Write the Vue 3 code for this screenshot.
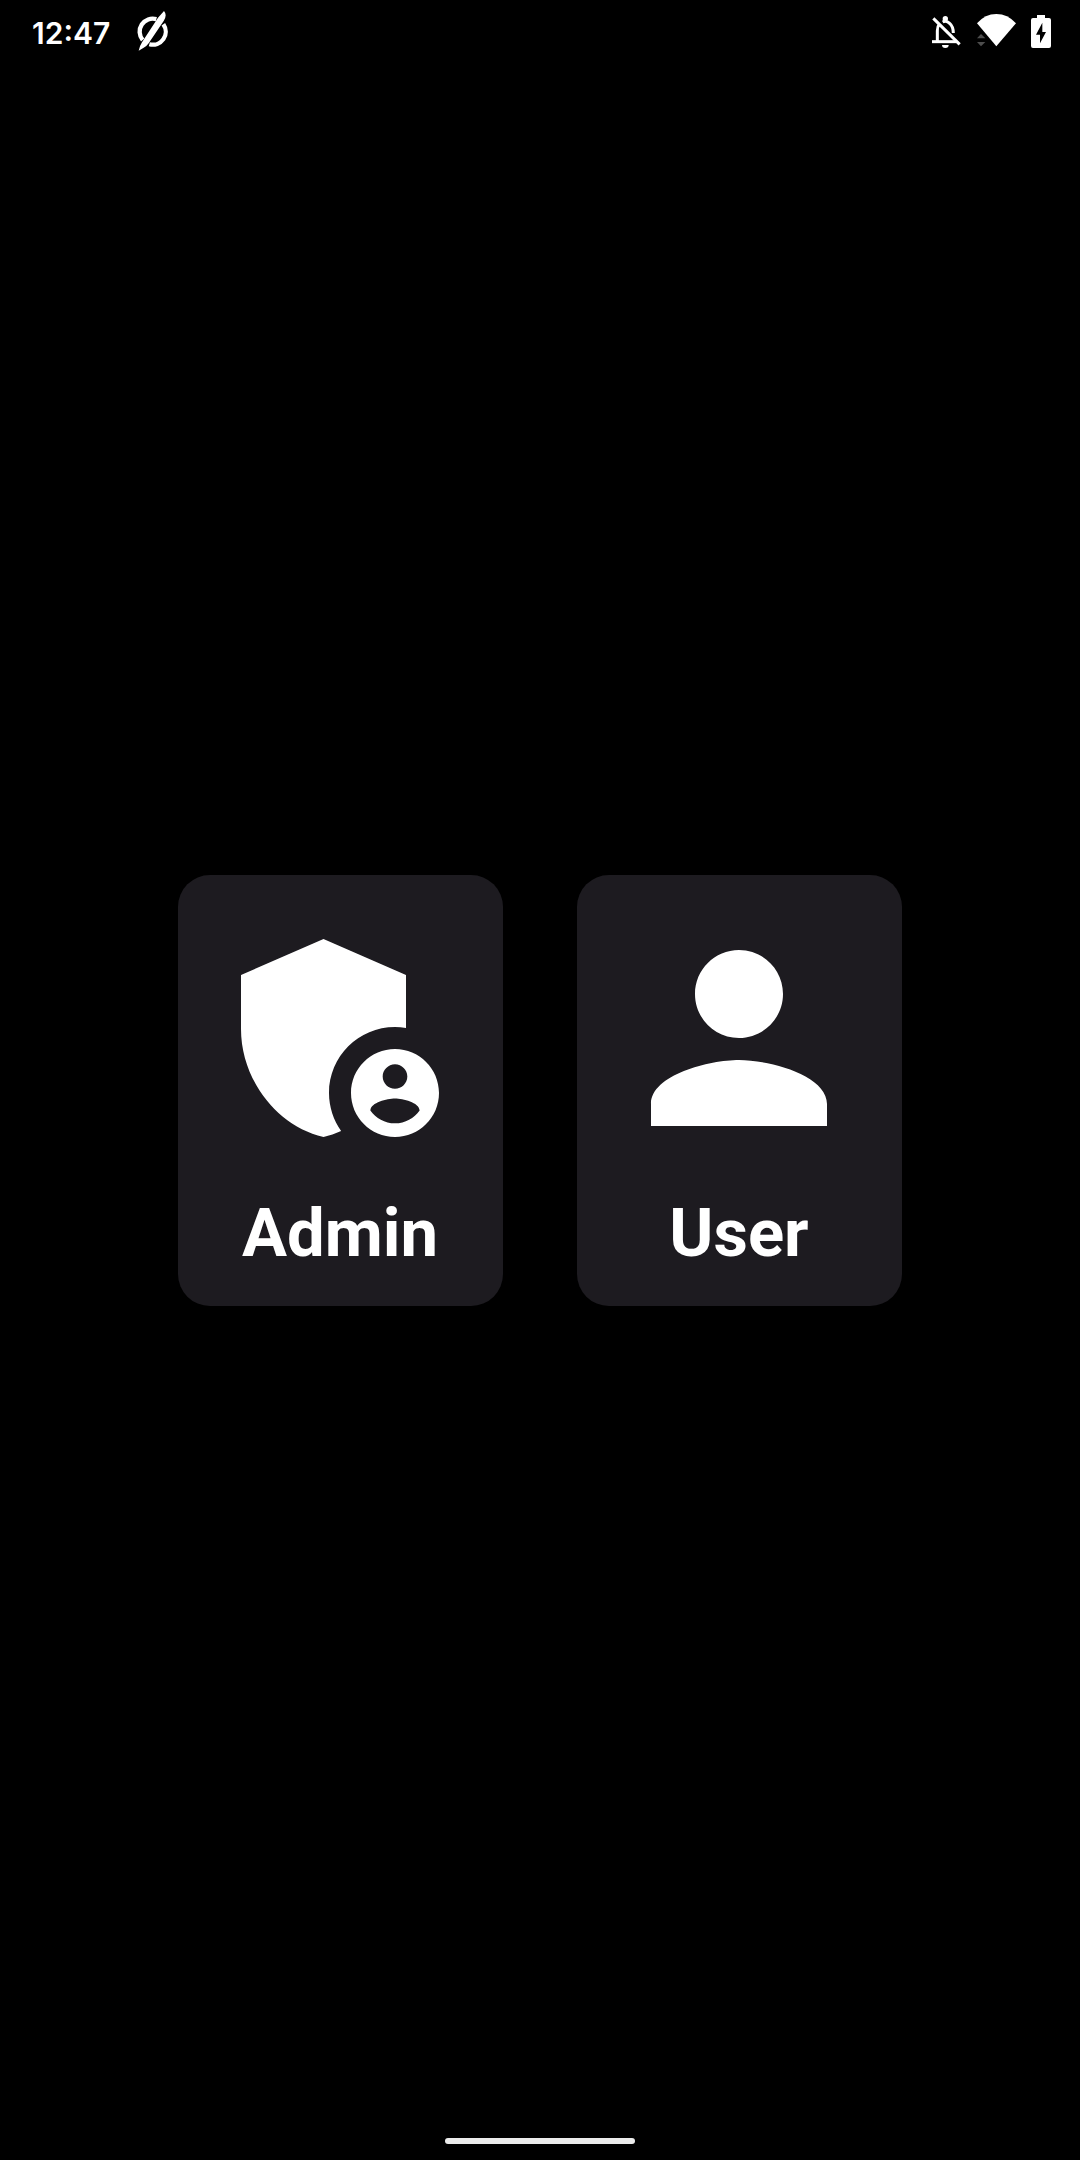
<script setup>
const roles = [
  { id: 'admin', label: 'Admin' },
  { id: 'user', label: 'User' },
]
</script>

<template>
  <div class="screen">
    <header class="status-bar">
      <div class="status-group left">
        <time class="clock">12:47</time>
        <svg class="app-icon" viewBox="0 0 120 144" aria-hidden="true">
          <path d="M73 33.600 A39 39 0 0 0 32 96" class="ring" />
          <path d="M94 48.500 A39 39 0 0 1 52 108.700" class="ring" />
          <path d="M96 9 Q101 14 101 22 Q101 30 95 39 L50 106 Q44 115 35 119 L20 128 Q23 114 30 103 L78 29 Z" fill="#fff" />
        </svg>
      </div>
      <div class="status-group right">
        <svg class="bell" viewBox="0 0 90 108" aria-hidden="true">
          <g fill="none" stroke="#fff" stroke-width="9">
            <path d="M3 83 H76" />
            <path d="M19 83 V50 Q19 38 25 31" />
            <path d="M35 24 Q46 18 56 28 Q67 38 67 57" />
            <path d="M7 13 L86 91" />
          </g>
          <circle cx="43" cy="14" r="8" fill="#fff" />
          <path d="M33 93 h20 a10 9 0 0 1 -20 0z" fill="#fff" />
        </svg>
        <svg class="wifi" viewBox="0 0 120 108" aria-hidden="true">
          <path d="M3 28 Q27 0 61 0 Q95 0 120 28 L61 97 Z" fill="#fff" />
          <path d="M3 73 L15 60 L28 73 Z M3 84 H28 L15 97 Z" fill="#4d4d4d" />
        </svg>
        <svg class="battery" viewBox="0 0 60 108" aria-hidden="true">
          <path fill-rule="evenodd" fill="#fff" d="M18 3 H42 V12 H54 Q60 12 60 18 V96 Q60 102 54 102 H6 Q0 102 0 96 V18 Q0 12 6 12 H18 Z M34 26 L15 62 H27 V88 L45 54 H34 Z" />
        </svg>
      </div>
    </header>

    <main class="roles">
      <button v-for="role in roles" :key="role.id" type="button" class="role-card">
        <svg class="role-icon" viewBox="0 0 24 24" fill="#fff" aria-hidden="true">
          <template v-if="role.id === 'admin'">
            <path d="M17 11c.34 0 .67.04 1 .09V6.27L10.500 3 3 6.27v4.910c0 4.540 3.200 8.790 7.500 9.820.55-.13 1.080-.32 1.600-.55-.69-.98-1.100-2.170-1.100-3.450 0-3.310 2.690-6 6-6z" />
            <path fill-rule="evenodd" d="M17 13c-2.210 0-4 1.790-4 4s1.790 4 4 4 4-1.790 4-4-1.790-4-4-4zm0 1.380c.62 0 1.120.51 1.120 1.120s-.51 1.120-1.120 1.120-1.120-.51-1.120-1.120.5-1.120 1.120-1.120zm0 5.370c-.93 0-1.740-.46-2.240-1.170.05-.72 1.510-1.080 2.240-1.080s2.190.36 2.240 1.080c-.5.71-1.310 1.170-2.240 1.170z" />
          </template>
          <path v-else d="M12 12c2.210 0 4-1.790 4-4s-1.790-4-4-4-4 1.790-4 4 1.790 4 4 4zm0 2c-2.670 0-8 1.340-8 4v2h16v-2c0-2.660-5.330-4-8-4z" />
        </svg>
        <span class="role-label">{{ role.label }}</span>
      </button>
    </main>

    <footer class="nav-area"><div class="nav-handle"></div></footer>
  </div>
</template>

<style>
body {
  background: #000;
}
</style>

<style scoped>
.screen {
  display: flex;
  flex-direction: column;
  min-height: 100vh;
  background: #000;
  color: #fff;
  font-family: Roboto, sans-serif;
}

.status-bar {
  display: flex;
  justify-content: space-between;
  align-items: center;
  height: 64px;
  padding: 0 29px 0 32px;
}

.status-group {
  display: flex;
  align-items: center;
}

.left {
  gap: 22px;
}

.right {
  gap: 15px;
}

.clock {
  padding-top: 2px;
  font-family: Inter, "Noto Sans", sans-serif;
  font-size: 30px;
  font-weight: 600;
  line-height: 40px;
}

.app-icon {
  width: 40px;
  height: 48px;
}

.ring {
  fill: none;
  stroke: #fff;
  stroke-width: 13;
}

.bell {
  width: 30px;
  height: 36px;
}

.wifi {
  width: 40px;
  height: 36px;
}

.battery {
  width: 20px;
  height: 36px;
}

.roles {
  display: flex;
  flex: 1;
  justify-content: center;
  align-items: center;
  gap: 74px;
}

.role-card {
  display: flex;
  flex-direction: column;
  align-items: center;
  gap: 22px;
  padding: 31px 31px 32px 30px;
  border: 0;
  border-radius: 32px;
  background: #1d1b20;
  color: #fff;
  font-family: inherit;
  cursor: pointer;
}

.role-icon {
  width: 264px;
  height: 264px;
}

.role-label {
  font-size: 67px;
  font-weight: 700;
  line-height: 82px;
}

.nav-area {
  display: flex;
  justify-content: center;
  align-items: flex-start;
  height: 43px;
  padding-top: 21px;
  box-sizing: border-box;
}

.nav-handle {
  width: 190px;
  height: 6px;
  border-radius: 3px;
  background: #ebebeb;
}
</style>
